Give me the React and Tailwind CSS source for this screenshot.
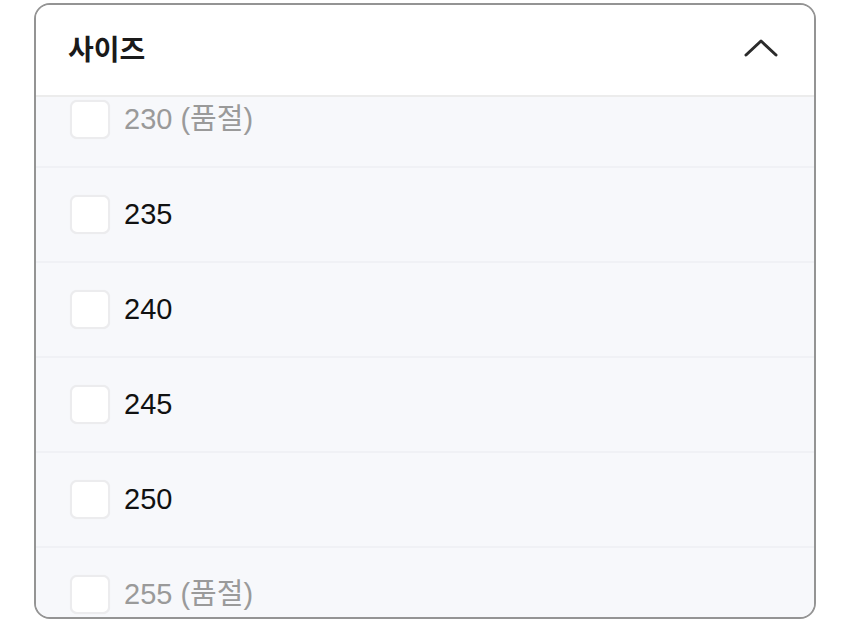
import { useState } from "react";

const SIZES = [
  { size: 230, soldOut: true },
  { size: 235, soldOut: false },
  { size: 240, soldOut: false },
  { size: 245, soldOut: false },
  { size: 250, soldOut: false },
  { size: 255, soldOut: true },
];

const SizeRow = ({ item, checked, onToggle }) => (
  <label className="flex h-[95px] items-center gap-[14px] border-b-2 border-[#f0f1f5] pl-[34px] cursor-pointer">
    <input
      type="checkbox"
      className="sr-only"
      checked={checked}
      disabled={item.soldOut}
      onChange={() => onToggle(item.size)}
    />
    <span className="h-[39px] w-[40px] shrink-0 rounded-[7px] border-2 border-[#ececee] bg-white shadow-[0_0_1px_rgba(0,0,0,0.06)]"></span>
    <span
      className={`text-[29px] leading-none ${item.soldOut ? "text-[#9a9a9a]" : "text-[#111111]"}`}
    >
      {item.size}
      {item.soldOut && " (품절)"}
    </span>
  </label>
);

export default function App() {
  const [selected, setSelected] = useState([]);

  const toggle = (size) => {
    setSelected((prev) =>
      prev.includes(size) ? prev.filter((s) => s !== size) : [...prev, size]
    );
  };

  return (
    <div
      className="flex h-[622px] w-[850px] bg-white px-[34px] pt-[3px] pb-[3px]"
      style={{ fontFamily: '"Liberation Sans", "Noto Sans CJK KR", sans-serif' }}
    >
      <div className="flex flex-1 flex-col overflow-hidden rounded-[16px] border-2 border-[#949494]">
        {/* header */}
        <div className="flex h-[92px] shrink-0 items-center justify-between border-b-2 border-[#ececec] bg-white pb-[5px] pl-[32px] pr-[36px]">
          <h2
            className="text-[28px] font-bold leading-none text-[#1a1a1a]"
            style={{ fontFamily: '"Noto Sans CJK KR", sans-serif' }}
          >
            사이즈
          </h2>
          <svg width="34" height="20" viewBox="0 0 34 20" fill="none">
            <path
              d="M2 17L17 3L32 17"
              stroke="#2b2b2b"
              strokeWidth="3"
              strokeLinecap="round"
              strokeLinejoin="round"
            />
          </svg>
        </div>

        {/* size list, scrolled a bit */}
        <div className="flex-1 overflow-hidden bg-[#f7f8fb]">
          <div className="-mt-[24px]">
            {SIZES.map((item) => (
              <SizeRow
                key={item.size}
                item={item}
                checked={selected.includes(item.size)}
                onToggle={toggle}
              />
            ))}
          </div>
        </div>
      </div>
    </div>
  );
}
